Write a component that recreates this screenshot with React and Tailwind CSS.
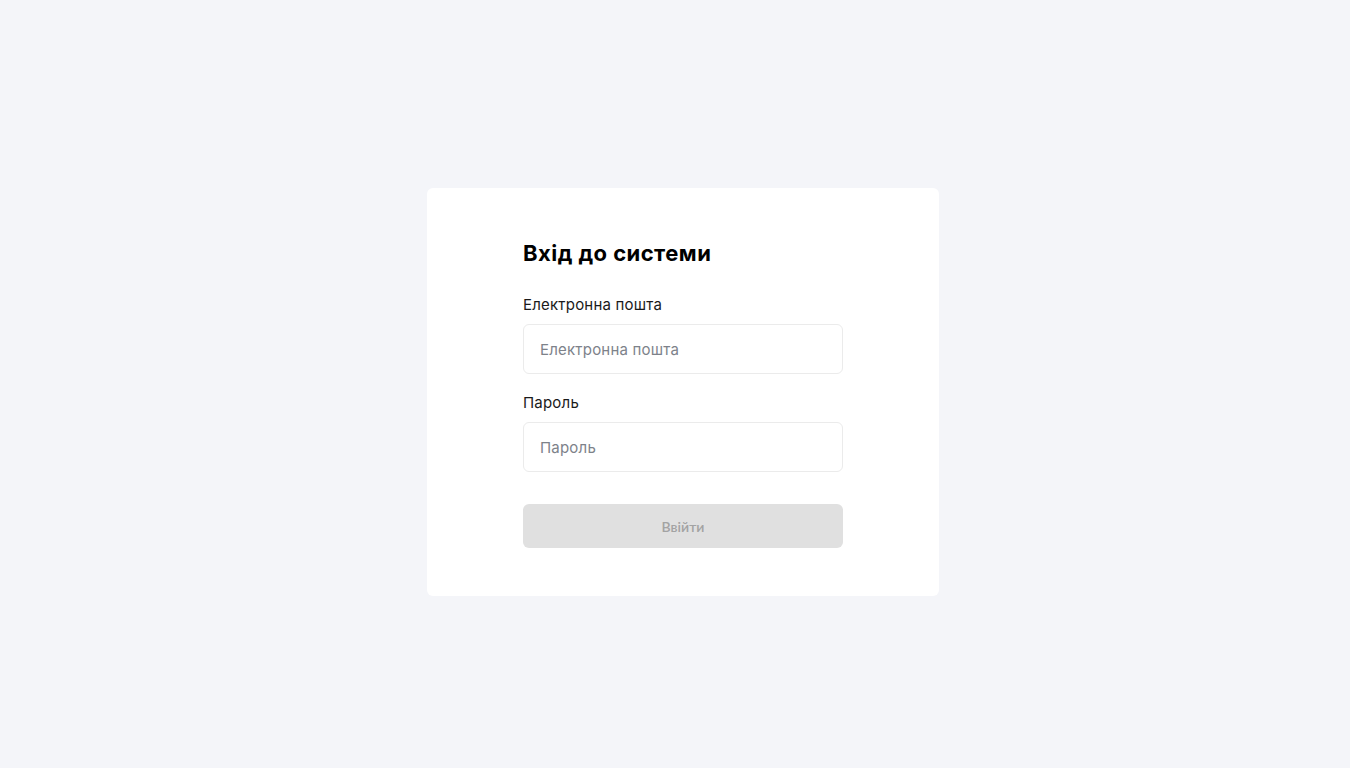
export default function App() {
  return (
    <div className="min-h-screen w-full bg-[#f4f5f9] flex items-center justify-center pl-4 pt-4">
      <div className="w-[512px] bg-white rounded-[6px] px-24 py-12 font-['Inter',sans-serif]">
        <h1 className="text-[22px] leading-8 font-bold text-black tracking-[0.45px] pt-px">Вхід до системи</h1>
        <div className="mt-[23px] flex flex-col">
          <label className="text-[15px] leading-[22px] pt-[2px] text-[#1a1a1a] tracking-[0.2px]">Електронна пошта</label>
          <input
            type="email"
            placeholder="Електронна пошта"
            className="mt-2 h-[50px] w-full rounded-[6px] border border-[#ebebeb] bg-white px-4 text-[15px] tracking-[0.2px] text-[#1a1a1a] placeholder:text-[#7d828a] outline-none"
          />
          <label className="mt-4 text-[15px] leading-[22px] pt-[2px] text-[#1a1a1a] tracking-[0.2px]">Пароль</label>
          <input
            type="password"
            placeholder="Пароль"
            className="mt-2 h-[50px] w-full rounded-[6px] border border-[#ebebeb] bg-white px-4 text-[15px] tracking-[0.2px] text-[#1a1a1a] placeholder:text-[#7d828a] outline-none"
          />
          <button
            disabled
            className="mt-8 h-11 w-full rounded-[6px] bg-[#e0e0e0] text-[14px] font-semibold text-[#a3a3a3] font-['Lato',sans-serif]"
          >
            Ввійти
          </button>
        </div>
      </div>
    </div>
  );
}
